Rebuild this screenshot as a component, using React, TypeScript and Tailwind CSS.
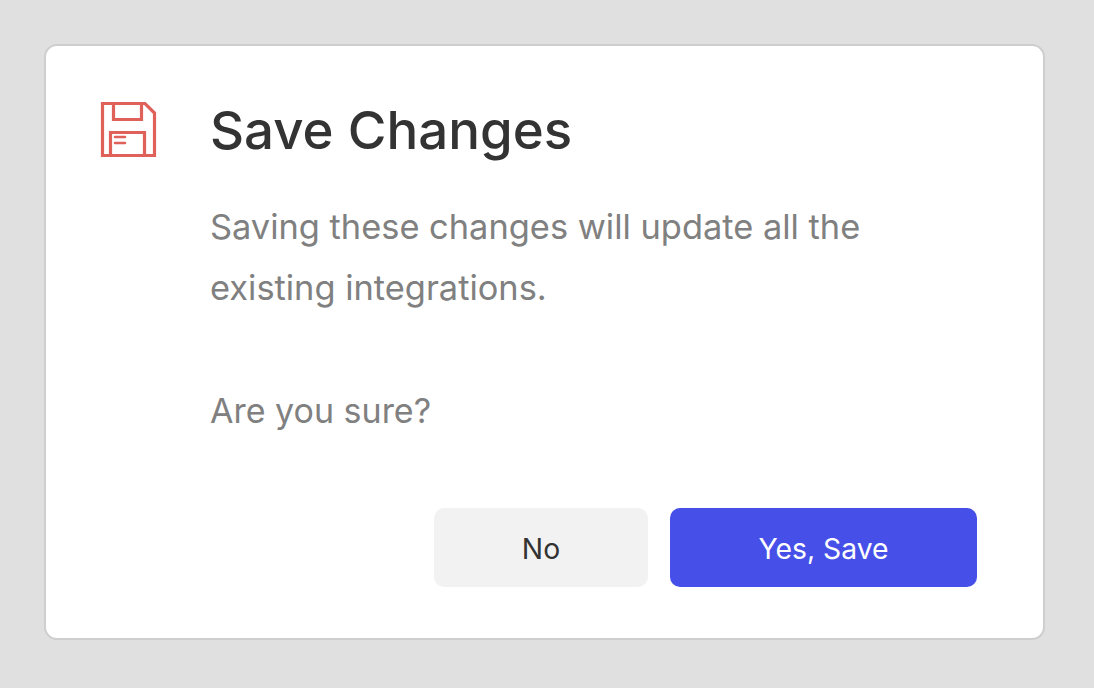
export default function App() {
  return (
    <div className="min-h-[688px] bg-[#e0e0e0] pt-[44px] pl-[44px] font-['Inter',sans-serif]">
      <div className="w-[1001px] h-[596px] rounded-[13px] bg-white border-2 border-[#cecece] pt-[55px] pl-[54px] pr-[66px] flex">
        <svg width="58" height="58" viewBox="0 0 58 58" fill="none" stroke="#e0605a" strokeWidth="3.2" className="shrink-0">
          <path d="M2.5 2.5H45L54.5 12V54.5H2.5Z" />
          <path d="M13.5 2.5V18.5H41.5V2.5" />
          <path d="M10.5 54.5V31.5H44.5V54.5" />
          <path d="M15 36H25M15 42H25" strokeWidth="2.5" strokeLinecap="round" />
        </svg>
        <div className="ml-[52px] flex-1">
          <h1 className="text-[52.8px] leading-[60px] font-[550] text-[#333333] -mt-[1px]">Save Changes</h1>
          <p className="mt-[36px] text-[34.4px] leading-[61px] text-[#808080] w-[700px]">Saving these changes will update all the existing integrations.</p>
          <p className="mt-[62px] text-[34px] leading-[61px] text-[#808080]">Are you sure?</p>
          <div className="mt-[67px] flex justify-end gap-[22px]">
            <button className="w-[214px] h-[79px] pt-[3px] rounded-[10px] bg-[#f2f2f2] text-[28.3px] font-normal text-[#333333]">No</button>
            <button className="w-[307px] h-[79px] pt-[3px] rounded-[10px] bg-[#4650e8] text-[28.3px] font-normal text-white">Yes, Save</button>
          </div>
        </div>
      </div>
    </div>
  );
}
